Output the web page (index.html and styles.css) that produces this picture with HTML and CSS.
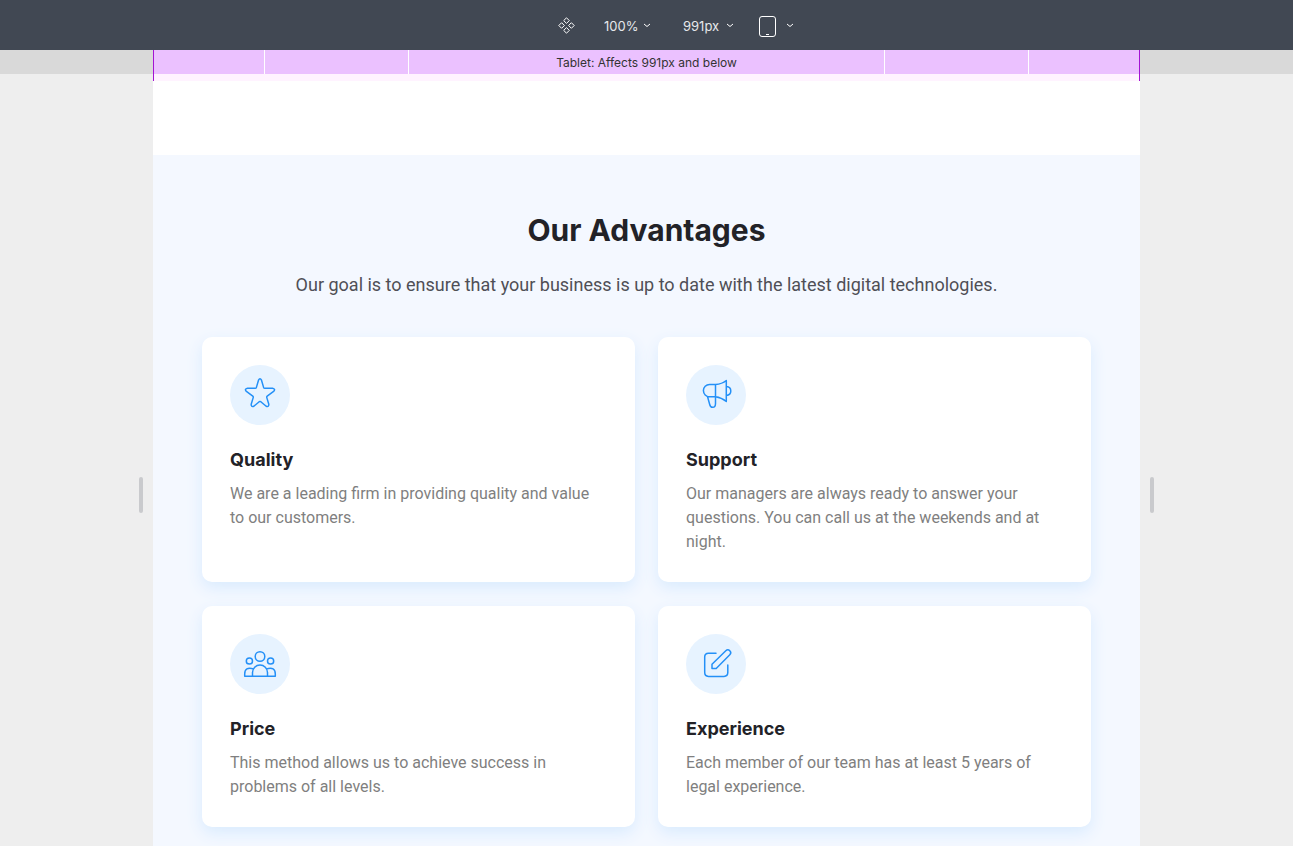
FILE: index.html
```html
<!DOCTYPE html>
<html lang="en">
<head>
<meta charset="utf-8">
<meta name="viewport" content="width=device-width, initial-scale=1">
<title>Our Advantages</title>
<link rel="stylesheet" href="styles.css">
</head>
<body>
<header class="toolbar">
  <button class="tool-button" type="button" aria-label="Components">
    <svg width="17" height="17" viewBox="0 0 17 17" fill="none" stroke="currentColor"><path d="M8.500.8l2.800 2.800-2.800 2.800-2.800-2.800zM3.600 5.700l2.800 2.800-2.800 2.800L.8 8.500zM13.400 5.700l2.800 2.800-2.800 2.800-2.800-2.800zM8.500 10.600l2.800 2.800-2.800 2.800-2.800-2.800z"/></svg>
  </button>
  <div class="picker zoom-picker">
    <select class="picker-select" aria-label="Zoom"><option>100%</option></select>
    <svg class="chevron" width="8" height="5" viewBox="0 0 8 5" fill="none" stroke="currentColor"><path d="M1 1l3 2.500L7 1"/></svg>
  </div>
  <div class="picker width-picker">
    <select class="picker-select" aria-label="Canvas width"><option>991px</option></select>
    <svg class="chevron" width="8" height="5" viewBox="0 0 8 5" fill="none" stroke="currentColor"><path d="M1 1l3 2.500L7 1"/></svg>
  </div>
  <button class="tool-button device-button" type="button" aria-label="Device: tablet">
    <svg width="18" height="22" viewBox="0 0 18 22" fill="none" stroke="currentColor"><rect x=".5" y="1.500" width="16" height="20" rx="2.500"/><path d="M7 19.500h3"/></svg>
    <svg width="8" height="5" viewBox="0 0 8 5" fill="none" stroke="currentColor"><path d="M1 1l3 2.500L7 1"/></svg>
  </button>
</header>
<div class="workspace">
  <div class="breakpoint-row">
    <div class="breakpoint-bar">
      <span class="segment segment-edge"></span>
      <span class="segment segment-side"></span>
      <span class="segment segment-main">Tablet: Affects 991px and below</span>
      <span class="segment segment-side"></span>
      <span class="segment segment-edge"></span>
    </div>
  </div>
  <div class="stage">
    <button class="handle handle-left" type="button" aria-label="Resize from left"></button>
    <button class="handle handle-right" type="button" aria-label="Resize from right"></button>
    <main class="page">
      <section class="advantages">
        <h1 class="heading">Our Advantages</h1>
        <p class="lead">Our goal is to ensure that your business is up to date with the latest digital technologies.</p>
        <div class="cards">
          <article class="card">
            <svg class="card-icon" viewBox="0 0 60 60" aria-hidden="true"><path d="M28.500 15.200Q30 12.200 31.500 15.200L33.600 22.400Q33.900 23.200 34.800 23.200H42.500Q46 24 43.600 26.400L37.200 31.100Q36.500 31.700 36.800 32.600L38.800 39.200Q39 42.300 36.200 41.300L30.800 36.700Q30 36.100 29.200 36.700L23.800 41.300Q21 42.300 21.200 39.200L23.200 32.600Q23.500 31.700 22.800 31.100L16.400 26.400Q14 24 17.500 23.200H25.200Q26.100 23.200 26.400 22.400Z"/></svg>
            <h2 class="card-title">Quality</h2>
            <p class="card-text">We are a leading firm in providing quality and value to our customers.</p>
          </article>
          <article class="card">
            <svg class="card-icon" viewBox="0 0 60 60" aria-hidden="true"><path d="M29.500 19.500H23.500a6 6 0 0 0 0 12.200h6Q35.500 32.500 40.300 36.500V15.500Q36 19 29.500 19.500V38.500Q29.500 42.500 26.500 42.300Q24.400 42.300 23.700 39.500L21.500 31.500M40.300 21.600q4.500.3 4.500 4.400t-4.500 4.400"/></svg>
            <h2 class="card-title">Support</h2>
            <p class="card-text">Our managers are always ready to answer your questions. You can call us at the weekends and at night.</p>
          </article>
          <article class="card">
            <svg class="card-icon" viewBox="0 0 60 60" aria-hidden="true"><circle cx="30" cy="22.500" r="4.800"/><circle cx="19.400" cy="27" r="3.100"/><circle cx="40.600" cy="27" r="3.100"/><path d="M22.500 42.300V38.500a7.500 7.500 0 0 1 15 0v3.800M23.500 34.900Q14.700 32.500 14.700 40v2.300h30.600V40Q45.300 32.500 36.500 34.900"/></svg>
            <h2 class="card-title">Price</h2>
            <p class="card-text">This method allows us to achieve success in problems of all levels.</p>
          </article>
          <article class="card">
            <svg class="card-icon" viewBox="0 0 60 60" aria-hidden="true"><path d="M30 19.300h-7.500q-3.800 0-3.800 3.800v15.500q0 3.800 3.800 3.800H38q3.800 0 3.800-3.800V31M26 34.500v-4.200L39.800 16.700a2.800 2.800 0 0 1 4 4L30.200 34.500Z"/></svg>
            <h2 class="card-title">Experience</h2>
            <p class="card-text">Each member of our team has at least 5 years of legal experience.</p>
          </article>
        </div>
      </section>
    </main>
  </div>
</div>
</body>
</html>
```

FILE: styles.css
```css
* { box-sizing: border-box; }

body {
  margin: 0;
  height: 100vh;
  display: flex;
  flex-direction: column;
  overflow: hidden;
  background: #eeeeee;
  font-family: Roboto, "Liberation Sans", sans-serif;
}

button { padding: 0; border: 0; background: none; color: inherit; font: inherit; }

.toolbar {
  flex: none;
  height: 50px;
  display: flex;
  align-items: center;
  justify-content: center;
  padding: 1px 0 0 59px;
  background: #414853;
  color: #ffffff;
  font: 13px/16px Inter, sans-serif;
}

.tool-button { display: flex; align-items: center; gap: 9px; }
.picker { display: grid; align-items: center; }
.zoom-picker { width: 47px; margin-left: 29px; }
.width-picker { width: 51px; margin-left: 32px; }
.device-button { margin-left: 25px; }

.picker-select {
  grid-area: 1 / 1;
  width: 100%;
  padding: 0;
  border: 0;
  appearance: none;
  background: none;
  color: #e6e8eb;
  font: inherit;
}

.chevron { grid-area: 1 / 1; justify-self: end; pointer-events: none; }

.workspace { flex: 1; display: flex; flex-direction: column; min-height: 0; }

.breakpoint-row {
  flex: none;
  padding: 0 153px;
  background: linear-gradient(#d9d9d9 24px, #eeeeee 24px);
}

.breakpoint-bar {
  display: flex;
  gap: 1px;
  height: 31px;
  padding-bottom: 7px;
  border: solid #a313d4;
  border-width: 0 1px;
  background: linear-gradient(#ffffff 24px, #fff3ff 24px);
}

.segment {
  background: #ebc1ff;
  color: #333333;
  font: 12px/24px Inter, sans-serif;
  text-align: center;
  white-space: nowrap;
}

.segment-edge { width: 110px; }
.segment-side { width: 143px; }
.segment-main { flex: 1; padding-top: 1px; }

.stage { position: relative; flex: 1; display: flex; padding: 0 153px; min-height: 0; }

.handle {
  position: absolute;
  top: 396px;
  width: 4px;
  height: 36px;
  border-radius: 2px;
  background: #c9cacd;
}

.handle-left { left: 139px; }
.handle-right { right: 139px; }

.page { flex: 1; overflow: hidden; padding-top: 74px; background: #ffffff; }

.advantages { padding: 55px 49px 80px; background: #f4f8ff; }

.heading {
  margin: 0;
  color: #222227;
  font: 700 30px/40px Inter, sans-serif;
  text-align: center;
}

.lead {
  margin: 20px 0 37px;
  color: #4f4f56;
  font-size: 18px;
  line-height: 30px;
  text-align: center;
}

.cards { display: grid; grid-template-columns: 1fr 1fr; gap: 24px 23px; }

.card {
  padding: 28px;
  border-radius: 10px;
  background: #ffffff;
  box-shadow: 0 6px 16px #d9ebfe;
}

.card-icon {
  display: block;
  width: 60px;
  height: 60px;
  border-radius: 50%;
  background: #e7f3ff;
  fill: none;
  stroke: #2490f7;
  stroke-width: 1.500;
  stroke-linecap: round;
  stroke-linejoin: round;
}

.card-title {
  margin: 23px 0 10px;
  color: #222227;
  font: 700 18px/24px Inter, sans-serif;
}

.card-text { margin: 0; color: #7f7f80; font-size: 16px; line-height: 24px; }
```
